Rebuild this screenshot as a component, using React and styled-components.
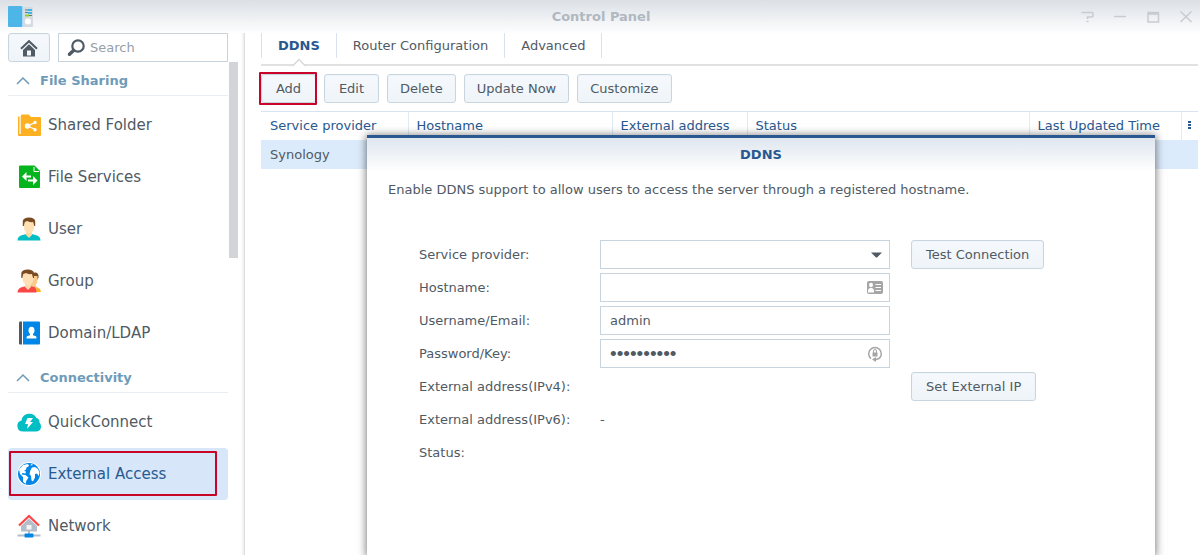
import React from "react";
import styled, { createGlobalStyle, css } from "styled-components";

const Global = createGlobalStyle`
  *, *::before, *::after { box-sizing: border-box; }
  html, body, #root { height: 100%; }
  body {
    margin: 0;
    overflow: hidden;
    font-family: Verdana, "DejaVu Sans", sans-serif;
    font-size: 13px;
    line-height: 16px;
    color: #505a64;
    background: #fff;
  }
  button, input, select { font: inherit; color: inherit; margin: 0; }
`;

const Window = styled.div`
  height: 100%;
  display: flex;
  flex-direction: column;
  background: linear-gradient(#dbe0e6, #fff 34px);
`;

const TitleBar = styled.header`
  flex: none;
  height: 33px;
  padding: 0 6px 0 8px;
  display: grid;
  grid-template-columns: 1fr auto 1fr;
  align-items: center;
`;

const Title = styled.h1`
  margin: 0;
  font-size: 13px;
  line-height: 16px;
  color: #b0b8c1;
`;

const WindowControls = styled.div`
  display: flex;
  justify-content: flex-end;
  gap: 17px;
`;

const ControlButton = styled.button`
  width: 16px;
  height: 16px;
  padding: 0;
  border: 0;
  background: none;
  svg { display: block; }
`;

const Body = styled.div`
  flex: 1;
  min-height: 0;
  display: flex;
`;

const Sidebar = styled.aside`
  flex: none;
  width: 245px;
  padding: 0 6px 0 8px;
  border-right: 1px solid #dcdfe2;
  box-shadow: inset -4px 0 3px -3px #e6e6e6;
  background: #fff;
  display: flex;
  flex-direction: column;
`;

const SearchRow = styled.div`
  flex: none;
  display: flex;
  gap: 8px;
  width: 220px;
`;

const buttonLook = css`
  border: 1px solid #c8d4de;
  border-radius: 3px;
  background: linear-gradient(#f5f9fd, #eff4f9);
  box-shadow: inset 0 0 0 1px #f0f5fa;
`;

const HomeButton = styled.button`
  ${buttonLook}
  width: 42px;
  height: 29px;
  padding: 0;
  display: grid;
  place-items: center;
`;

const SearchBox = styled.label`
  flex: 1;
  min-width: 0;
  height: 29px;
  border: 1px solid #c8d4de;
  background: #fff;
  display: flex;
  align-items: center;
  gap: 5px;
  padding-left: 8px;
`;

const SearchInput = styled.input`
  flex: 1;
  min-width: 0;
  border: 0;
  padding: 0;
  outline: 0;
  background: none;
  &::placeholder { color: #96a0aa; opacity: 1; }
`;

const ScrollArea = styled.div`
  flex: 1;
  min-height: 0;
  overflow: hidden;
  display: flex;
  gap: 1px;
`;

const NavColumn = styled.nav`
  width: 220px;
`;

const ScrollThumb = styled.div`
  width: 9px;
  height: 196px;
  background: #d2d4d7;
`;

const NavGroup = styled.section`
  display: block;
`;

const GroupToggle = styled.button`
  width: 100%;
  height: 34px;
  padding: 4px 8px 0;
  border: 0;
  border-bottom: 1px solid #e8eef4;
  background: none;
  display: flex;
  align-items: center;
  gap: 10px;
  font-weight: bold;
  color: #6e9bb9;
`;

const NavList = styled.ul`
  list-style: none;
  margin: 0;
  padding: 3px 0 0;
`;

const NavLink = styled.a`
  height: 52px;
  padding-left: 9px;
  display: flex;
  align-items: center;
  gap: 7px;
  font-size: 15px;
  line-height: 20px;
  text-decoration: none;
  border-radius: 4px;
  position: relative;
  color: ${(p) => (p.$active ? "#285a91" : "#505a64")};
  background: ${(p) => (p.$active ? "#d7e6f8" : "transparent")};
  svg { flex: none; }
`;

const NavMark = styled.span`
  position: absolute;
  inset: 3px 11px 4px 1px;
  border: 2px solid #c80428;
  border-radius: 1px;
`;

const Main = styled.main`
  flex: 1;
  min-width: 0;
  position: relative;
  padding: 0 2px 0 16px;
  background: #fff;
`;

const TabBar = styled.div`
  height: 33px;
  border-bottom: 2px solid #dfe1e3;
  display: flex;
  position: relative;
`;

const Tab = styled.button`
  height: 25px;
  padding: 0 16px;
  border: 0;
  border-right: 1px solid #d7e2ee;
  background: none;
  font-weight: ${(p) => (p.$active ? "bold" : "normal")};
  color: ${(p) => (p.$active ? "#28588f" : "#505a64")};
  &:first-child { border-left: 1px solid #d7e2ee; }
`;

const TabPointer = styled.svg`
  position: absolute;
  left: 31px;
  top: 25px;
`;

const Toolbar = styled.div`
  padding: 8px 0;
  display: flex;
  gap: 8px;
`;

const Button = styled.button`
  ${buttonLook}
  height: 29px;
  min-width: 55px;
  padding: 0 ${(p) => (p.$roomy ? "14px" : "12px")};
  white-space: nowrap;
  position: relative;
`;

const ButtonMark = styled.span`
  position: absolute;
  inset: -3px -2px -3px -3px;
  border: 2px solid #c80428;
  border-radius: 1px;
`;

const Table = styled.table`
  width: 100%;
  table-layout: fixed;
  border-collapse: collapse;
`;

const Head = styled.th`
  width: ${(p) => p.$width || "auto"};
  height: 28px;
  padding: 0 8px;
  text-align: left;
  font-weight: normal;
  white-space: nowrap;
  color: #28588f;
  border-top: 1px solid #d7e3f0;
  border-left: 1px solid #e1ebf5;
  &:first-child {
    border-left: 0;
    padding-left: 9px;
  }
`;

const MenuHead = styled(Head)`
  padding: 0 6px;
  svg { display: block; }
`;

const Cell = styled.td`
  height: 29px;
  padding: 1px 9px 0;
  background: #dcebfb;
`;

const Dialog = styled.section`
  position: absolute;
  top: 102px;
  left: 122px;
  right: 45px;
  bottom: 0;
  border-top: 3px solid #28588f;
  background: linear-gradient(#dfe6ef, #fff 34px);
  box-shadow: 0 1px 8px 1px rgba(0, 0, 0, 0.5);
`;

const DialogTitle = styled.h2`
  margin: 0;
  padding-top: 9px;
  text-align: center;
  font-size: 13px;
  line-height: 16px;
  color: #28588f;
`;

const Intro = styled.p`
  margin: 0;
  padding: 19px 21px 0;
`;

const Form = styled.form`
  padding: 42px 52px 0;
  display: grid;
  grid-template-columns: 160px 290px auto;
  column-gap: 21px;
  row-gap: 4px;
  grid-auto-rows: 29px;
  align-items: center;
  justify-content: start;
`;

const FormLabel = styled.label`
  grid-column: 1;
  white-space: nowrap;
`;

const Field = styled.div`
  grid-column: 2;
  display: grid;
  align-items: center;
  > * { grid-area: 1 / 1; }
  > svg { justify-self: end; margin-right: 6px; pointer-events: none; }
`;

const control = css`
  width: 100%;
  height: 29px;
  padding: 0 9px;
  border: 1px solid #c8d4de;
  border-radius: 0;
  background: #fff;
  outline: 0;
`;

const TextInput = styled.input`${control}`;

const PasswordInput = styled.input`
  ${control}
  font-family: "Liberation Sans", sans-serif;
  font-size: 19px;
`;

const Select = styled.select`
  ${control}
  appearance: none;
`;

const Value = styled.output`
  grid-column: 2;
`;

const SideAction = styled.div`
  grid-column: 3;
`;

const Svg = ({ size = 24, children, ...rest }) => (
  <svg width={size} height={size} viewBox={`0 0 ${size} ${size}`} aria-hidden="true" {...rest}>
    {children}
  </svg>
);

const AppLogo = () => (
  <svg width="26" height="22" viewBox="0 0 26 22" aria-hidden="true">
    <rect x="13" y="1" width="12" height="20" rx="1" fill="#d5dbe0" />
    <rect x="0" y="0" width="14" height="21" rx="1" fill="#4fb4e8" />
    <path d="M14.500 0v21" stroke="#a4daf5" />
    <path d="M2 5l1 1 1-1M2 10l1 1 1-1M2 15l1 1 1-1M6 5.500h6M6 10.500h6M6 15.500h6" stroke="#3fc0e6" fill="none" />
    <path d="M17 4h7M17 6.500h7M17 9.500h7" stroke="#6c7680" />
    <path d="M20 4h4M20 7h4" stroke="#3db7e8" strokeWidth="2" />
    <path d="M17 9.500h4" stroke="#8ad02c" strokeWidth="2" />
    <circle cx="20" cy="15.500" r="3" fill="#fff" />
  </svg>
);

const HomeIcon = () => (
  <Svg size={18}>
    <path d="M1 9.800 9 2.200l8 7.600" fill="none" stroke="#505a64" strokeWidth="2" />
    <path d="M3 11 9 5.200l6 5.800v6.500H3z" fill="#505a64" />
    <path d="M7 11.500h4v5H7z" fill="#f3f7fb" />
  </Svg>
);

const SearchIcon = () => (
  <Svg size={18}>
    <circle cx="11" cy="7" r="5.700" fill="none" stroke="#505a64" strokeWidth="2.200" />
    <path d="M6.500 11.500 2.500 15.200" stroke="#505a64" strokeWidth="3.500" strokeLinecap="round" />
  </Svg>
);

const Chevron = () => (
  <svg width="14" height="10" viewBox="0 0 14 10" aria-hidden="true">
    <path d="M1 8l6-6 6 6" fill="none" stroke="#6e9bb9" strokeWidth="1.500" />
  </svg>
);

const SharedFolderIcon = () => (
  <Svg>
    <path d="M1 3.500h1.500v17.500H4V23H2q-1 0-1-1z" fill="#fdb022" />
    <path d="M3.700 3.500q0-2 1.500-2h6.500l2.300 2.500h9q1 0 1 1v17q0 1-1 1H2.500v-2h1.200z" fill="#fdb022" />
    <path d="M18 9.500 11 13l7 3.500" fill="none" stroke="#fff" strokeWidth="1.300" />
    <circle cx="10.500" cy="13" r="2.700" fill="#fff" />
    <circle cx="18" cy="9.500" r="1.700" fill="#fff" />
    <circle cx="18" cy="16.700" r="1.700" fill="#fff" />
  </Svg>
);

const FileServicesIcon = () => (
  <Svg>
    <path d="M2 1.500q0-1 1-1h14.500l5.500 5.500v16q0 1-1 1H3q-1 0-1-1z" fill="#06b41e" />
    <path d="M17 2v4.500h5" fill="none" stroke="#fff" />
    <path d="M5 11.500 9.500 7v3.500H14v2H9.500V16zM20.500 15.500 16 11v3.500h-5v2h5V20z" fill="#fff" />
  </Svg>
);

const UserIcon = () => (
  <Svg>
    <path d="M.5 23.500q0-4.500 5-5.500l4-1h5l4 1q5 1 5 5.500z" fill="#00bec3" />
    <path d="M9 14h6v4l-3 3-3-3z" fill="#fbd9a6" />
    <path d="M6.800 4h10.400v6q0 3-2.400 5.500-2.800 2-5.600 0Q6.800 13 6.800 10z" fill="#fee0b4" />
    <path d="M5.800 9V4Q6.500.5 12 .5T18.200 4v5h-1l-1-4q-4 .5-6-1L7.800 5l-1 4z" fill="#7a4b22" />
  </Svg>
);

const GroupIcon = () => (
  <Svg>
    <path d="M15 5q1-2 4-1.500 3 1 2.500 5L20 11z" fill="#7a4b22" />
    <path d="M15 7h5.500v4q0 3-2 5l1 2 2 2-5 2-4-8z" fill="#fbc98a" />
    <path d="m19.500 18 3.500 2 1 3h-5z" fill="#fdb022" />
    <path d="M.5 23.500q0-4.500 5-5.500l4-1h4l4 1q2 1 2 5.500z" fill="#fa4646" />
    <path d="M8 14h6v4l-3 3-3-3z" fill="#fbd9a6" />
    <path d="M5.500 4h11v6q0 3-2.500 5.500-3 2-5.500 0Q5.500 13 5.500 10z" fill="#fee0b4" />
    <path d="M4.300 9V4Q5 .5 10.700.5T17 4v5h-1l-1-4q-4 .5-6-1L6.300 5l-1 4z" fill="#7a4b22" />
  </Svg>
);

const DomainIcon = () => (
  <Svg>
    <path d="M2 1.500q0-1 1-1h2v23H3q-1 0-1-1z" fill="#505a64" />
    <path d="M6 .5h16q1 0 1 1v21q0 1-1 1H6z" fill="#0086e6" />
    <ellipse cx="14.500" cy="9.500" rx="3" ry="3.700" fill="#fff" />
    <path d="M13 12h3v2.300l3 .9q.5.500.5 2.300h-10q0-1.800.5-2.300l3-.9z" fill="#fff" />
  </Svg>
);

const QuickConnectIcon = () => (
  <Svg>
    <path d="M6 21.500A5.600 5.600 0 0 1 4.500 10.500 8 8 0 0 1 19.500 8q3 .5 3 4.500 1.500 1.500 1.500 4 0 5-5.500 5z" fill="#00bec3" />
    <path d="m10.500 8-2.500 6h3l-1 5 6-7h-3l3-4z" fill="#fff" />
  </Svg>
);

const GlobeIcon = () => (
  <Svg>
    <circle cx="12" cy="12" r="12" fill="#fff" />
    <circle cx="12" cy="12" r="11" fill="#0086e6" />
    <path d="M2 7.500 6 3l5-1 1 2-2.500 1.500L9 7.500 7 9l2 .5-.5 2L5.500 11l-1 1.500 4 .5 3 2.500-2 3-1 3.500-2.500-2.500V15L3 12z" fill="#fff" />
    <path d="m13.500 8 1.500-2.500L18 5l3 2 1.500 4-1 3-1.500-2.500-2 .5v3.500L16 19.500l-1.500-1-.5-4.500-1.500-2zM13.500 3.500 14 2l2.500 1z" fill="#fff" />
  </Svg>
);

const NetworkIcon = () => (
  <Svg>
    <path d="M4 12l8-7.500 8 7.500v5.500H4z" fill="#b4bec8" />
    <path d="M9.500 11h5v4.500h-5z" fill="#fff" opacity=".85" />
    <path d="M2 11.500 12 2l10 9.500" fill="none" stroke="#fa4646" strokeWidth="2.200" />
    <path d="M.5 21.500h23M12 17v3" stroke="#b4bec8" strokeWidth="2" />
    <rect x="7.500" y="19.500" width="9" height="4" rx="1" fill="#0086e6" />
  </Svg>
);

const DotsIcon = () => (
  <svg width="3" height="9" viewBox="0 0 3 9" aria-hidden="true">
    <path d="M0 0h3v2H0zM0 3h3v2H0zM0 6h3v2H0z" fill="#28588f" />
  </svg>
);

const CaretIcon = () => (
  <Svg size={16}>
    <path d="M3 5.500h11L9 10.500H8z" fill="#505a64" />
  </Svg>
);

const ContactIcon = () => (
  <svg width="18" height="16" viewBox="0 0 18 16" aria-hidden="true">
    <rect x="1" y="1" width="16" height="13" rx="2" fill="#a5a5a5" />
    <ellipse cx="5" cy="5" rx="2" ry="2.300" fill="#fff" />
    <path d="M2 12.500V11q0-2.500 2-3h2q2 .5 2 3v1.500z" fill="#fff" />
    <path d="M9.500 4.500H15M9.500 7.500H15M9.500 10.500H15" stroke="#fff" strokeWidth="1.200" />
  </svg>
);

const PasswordIcon = () => (
  <Svg size={18}>
    <path d="M5 13.700A6.300 6.300 0 1 1 13 13.700" fill="none" stroke="#a5a5a5" strokeWidth="1.500" />
    <path d="M6 14.500 10 12v5z" fill="#a5a5a5" />
    <path d="M10 14.500l3-1" stroke="#a5a5a5" strokeWidth="1.500" />
    <path d="M6.500 7.500h5v4h-5z" fill="#a5a5a5" />
    <path d="M7.500 8V6q0-1.500 1.500-1.500t1.500 1.500v2" fill="none" stroke="#a5a5a5" />
  </Svg>
);

const controls = [
  ["Help", <path d="M2.500 3.500H13q1 0 1 1.500v1.500q0 1.500-1 1.500H8.500v2M7.500 12.500h2" />],
  ["Minimize", <path d="M2 7.500h12" />],
  ["Maximize", <path d="M3 3.500h10.500v9.500H3zM3 5h10.500" />],
  ["Close", <path d="M2.500 2.500l11 10.500M13.500 2.500l-11 10.500" />],
];

const groups = [
  {
    name: "File Sharing",
    items: [
      ["Shared Folder", SharedFolderIcon],
      ["File Services", FileServicesIcon],
      ["User", UserIcon],
      ["Group", GroupIcon],
      ["Domain/LDAP", DomainIcon],
    ],
  },
  {
    name: "Connectivity",
    items: [
      ["QuickConnect", QuickConnectIcon],
      ["External Access", GlobeIcon],
      ["Network", NetworkIcon],
    ],
  },
];

const columns = [
  ["Service provider", "147px"],
  ["Hostname", "204px"],
  ["External address", "135px"],
  ["Status", null],
  ["Last Updated Time", "152px"],
];

export default function App() {
  return (
    <>
      <Global />
      <Window>
        <TitleBar>
          <AppLogo />
          <Title>Control Panel</Title>
          <WindowControls>
            {controls.map(([name, drawing]) => (
              <ControlButton key={name} aria-label={name}>
                <Svg size={16} fill="none" stroke="#c8ccd0" strokeWidth="1.500">{drawing}</Svg>
              </ControlButton>
            ))}
          </WindowControls>
        </TitleBar>
        <Body>
          <Sidebar>
            <SearchRow>
              <HomeButton aria-label="Home"><HomeIcon /></HomeButton>
              <SearchBox>
                <SearchIcon />
                <SearchInput type="text" placeholder="Search" aria-label="Search" />
              </SearchBox>
            </SearchRow>
            <ScrollArea>
              <NavColumn>
                {groups.map((group) => (
                  <NavGroup key={group.name}>
                    <GroupToggle><Chevron />{group.name}</GroupToggle>
                    <NavList>
                      {group.items.map(([label, Icon]) => {
                        const active = label === "External Access";
                        return (
                          <li key={label}>
                            <NavLink href="#" $active={active}>
                              <Icon />
                              {label}
                              {active && <NavMark />}
                            </NavLink>
                          </li>
                        );
                      })}
                    </NavList>
                  </NavGroup>
                ))}
              </NavColumn>
              <ScrollThumb />
            </ScrollArea>
          </Sidebar>
          <Main>
            <TabBar>
              <Tab $active>DDNS</Tab>
              <Tab>Router Configuration</Tab>
              <Tab>Advanced</Tab>
              <TabPointer width="14" height="9" viewBox="0 0 14 9" aria-hidden="true">
                <path d="M0 9 7 1l7 8z" fill="#fff" />
                <path d="M0 7.500h1L7 1.500l6 6h1" fill="none" stroke="#d7d9db" strokeWidth="1.500" />
              </TabPointer>
            </TabBar>
            <Toolbar>
              <Button>Add<ButtonMark /></Button>
              <Button>Edit</Button>
              <Button>Delete</Button>
              <Button>Update Now</Button>
              <Button>Customize</Button>
            </Toolbar>
            <Table>
              <thead>
                <tr>
                  {columns.map(([name, width]) => (
                    <Head key={name} $width={width}>{name}</Head>
                  ))}
                  <MenuHead $width="17px" aria-label="Column options"><DotsIcon /></MenuHead>
                </tr>
              </thead>
              <tbody>
                <tr>
                  <Cell>Synology</Cell>
                  <Cell /><Cell /><Cell /><Cell /><Cell />
                </tr>
              </tbody>
            </Table>
            <Dialog role="dialog" aria-labelledby="dialog-title">
              <DialogTitle id="dialog-title">DDNS</DialogTitle>
              <Intro>Enable DDNS support to allow users to access the server through a registered hostname.</Intro>
              <Form>
                <FormLabel htmlFor="provider">Service provider:</FormLabel>
                <Field>
                  <Select id="provider" defaultValue=""><option value="" /></Select>
                  <CaretIcon />
                </Field>
                <SideAction><Button type="button" $roomy>Test Connection</Button></SideAction>
                <FormLabel htmlFor="hostname">Hostname:</FormLabel>
                <Field>
                  <TextInput id="hostname" type="text" />
                  <ContactIcon />
                </Field>
                <FormLabel htmlFor="username">Username/Email:</FormLabel>
                <Field>
                  <TextInput id="username" type="text" defaultValue="admin" />
                </Field>
                <FormLabel htmlFor="password">Password/Key:</FormLabel>
                <Field>
                  <PasswordInput id="password" type="password" defaultValue="0000000000" />
                  <PasswordIcon />
                </Field>
                <FormLabel as="span">External address(IPv4):</FormLabel>
                <SideAction><Button type="button" $roomy>Set External IP</Button></SideAction>
                <FormLabel as="span">External address(IPv6):</FormLabel>
                <Value>-</Value>
                <FormLabel as="span">Status:</FormLabel>
              </Form>
            </Dialog>
          </Main>
        </Body>
      </Window>
    </>
  );
}
